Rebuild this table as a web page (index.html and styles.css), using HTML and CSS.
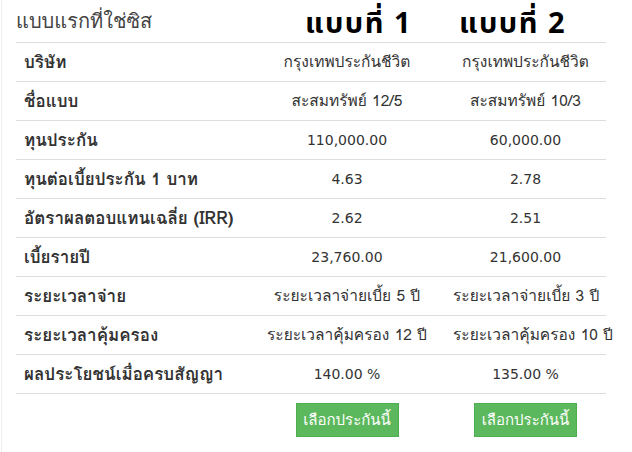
FILE: index.html
```html
<!DOCTYPE html>
<html lang="th"><head><meta charset="utf-8"><title>แบบแรกที่ใช่ซิส</title><link rel="stylesheet" href="styles.css"></head>
<body>
<div class="page">
<table class="cmp">
<colgroup><col class="c1"><col class="c2"><col class="c3"></colgroup>
<thead>
<tr>
<th><div class="hcell title">แบบแรกที่ใช่ซิส</div></th>
<th><div class="hcell plan plan1">แบบที่ 1</div></th>
<th><div class="hcell plan plan2">แบบที่ 2</div></th>
</tr>
</thead>
<tbody>
<tr><td class="lbl">บริษัท</td><td>กรุงเทพประกันชีวิต</td><td>กรุงเทพประกันชีวิต</td></tr>
<tr><td class="lbl">ชื่อแบบ</td><td>สะสมทรัพย์ 12/5</td><td>สะสมทรัพย์ 10/3</td></tr>
<tr><td class="lbl">ทุนประกัน</td><td class="num">110,000.00</td><td class="num">60,000.00</td></tr>
<tr><td class="lbl">ทุนต่อเบี้ยประกัน 1 บาท</td><td class="num">4.63</td><td class="num">2.78</td></tr>
<tr><td class="lbl">อัตราผลตอบแทนเฉลี่ย (IRR)</td><td class="num">2.62</td><td class="num">2.51</td></tr>
<tr><td class="lbl">เบี้ยรายปี</td><td class="num">23,760.00</td><td class="num">21,600.00</td></tr>
<tr><td class="lbl">ระยะเวลาจ่าย</td><td>ระยะเวลาจ่ายเบี้ย 5 ปี</td><td>ระยะเวลาจ่ายเบี้ย 3 ปี</td></tr>
<tr><td class="lbl">ระยะเวลาคุ้มครอง</td><td>ระยะเวลาคุ้มครอง 12 ปี</td><td>ระยะเวลาคุ้มครอง 10 ปี</td></tr>
<tr><td class="lbl">ผลประโยชน์เมื่อครบสัญญา</td><td class="num">140.00 %</td><td class="num">135.00 %</td></tr>
<tr class="actions"><td></td><td><button class="btn">เลือกประกันนี้</button></td><td><button class="btn">เลือกประกันนี้</button></td></tr>
</tbody>
</table>
</div>
</body></html>
```
FILE: styles.css
```css
html,body{margin:0;padding:0;background:#fff}
body{font-family:"Loma","DejaVu Sans",sans-serif;color:#333;font-size:15.5px}
.page{margin-left:1px;border-left:1px solid #eee;height:452px;padding-left:14px;box-sizing:border-box}
.cmp{border-collapse:collapse;width:590px;table-layout:fixed}
.c1{width:233px}
.c2{width:196px}
.c3{width:161px}
.cmp th{padding:0;vertical-align:bottom;border-bottom:1px solid #ddd;text-align:left;font-weight:normal}
.hcell{height:42px;box-sizing:border-box;display:flex;align-items:flex-end;white-space:nowrap}
.title{font-family:"Loma","DejaVu Sans",sans-serif;font-size:20px;color:#444;line-height:24px;padding-bottom:9px}
.plan{font-family:"Noto Sans Thai","DejaVu Sans",sans-serif;font-weight:700;font-size:29px;letter-spacing:1.5px;color:#000;line-height:34px;padding-bottom:1px}
.plan1{padding-left:56px}
.plan2{padding-left:14px}
.cmp td{padding:8px;line-height:22px;border-top:1px solid #ddd;text-align:center;white-space:nowrap}
.cmp tbody tr:first-child td{border-top:0}
.cmp td.num{font-family:"DejaVu Sans",sans-serif;font-size:14px}
.cmp td.lbl{text-align:left;font-weight:bold;font-size:17px}
.cmp .actions td{padding-top:9px}
.btn{background:#5cb85c;border:1px solid #4cae4c;color:#fff;font-family:"Loma",sans-serif;font-size:15px;line-height:20px;padding:6px 0;width:103px;border-radius:0;cursor:pointer}
```
